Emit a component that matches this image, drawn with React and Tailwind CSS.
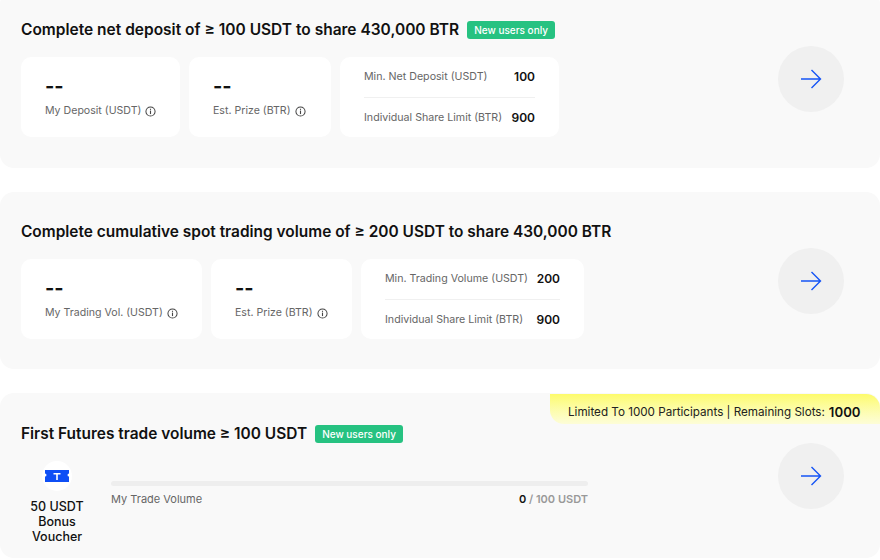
const FONT = { fontFamily: "Inter, 'Liberation Sans', sans-serif" };

function InfoIcon() {
  return (
    <svg width="11" height="11" viewBox="0 0 12 12" fill="none" className="shrink-0 text-[#444]">
      <circle cx="6" cy="6" r="5" stroke="currentColor" strokeWidth="1.1" />
      <rect x="5.4" y="5" width="1.2" height="3.8" fill="currentColor" />
      <rect x="5.4" y="3" width="1.2" height="1.2" fill="currentColor" />
    </svg>
  );
}

function ArrowButton({ className }) {
  return (
    <div className={`flex h-[66px] w-[66px] shrink-0 items-center justify-center rounded-full bg-[#f0f0f0] ${className}`}>
      <svg width="22" height="22" viewBox="0 0 22 22" fill="none">
        <path d="M1 11H20.5M11.5 2L20.5 11L11.5 20" stroke="#1554f5" strokeWidth="1.4" />
      </svg>
    </div>
  );
}

function NewBadge() {
  return (
    <span className="rounded-[3px] bg-[#26c281] px-[7px] py-[2px] text-[10px] leading-[14px] font-medium text-white">
      New users only
    </span>
  );
}

function StatCard({ label, width }) {
  return (
    <div className={`h-[80px] rounded-[10px] bg-white pt-[15px] pl-[24px] ${width}`}>
      <div className="text-[20px] leading-[28px] font-bold text-[#111]">--</div>
      <div className="mt-[3px] flex items-center gap-[4px] text-[10.6px] leading-[16px] text-[#666]">
        {label}
        <InfoIcon />
      </div>
    </div>
  );
}

function LimitRow({ label, value, height }) {
  return (
    <div className={`flex items-center justify-between ${height}`}>
      <span className="text-[10.65px] text-[#666]">{label}</span>
      <span className="text-[12px] font-semibold text-[#111]">{value}</span>
    </div>
  );
}

function TaskCard({ title, titleSize, badge, stats, rows, limitWidth, height }) {
  return (
    <section className={`relative rounded-[14px] bg-[#f9f9f9] pt-[28px] pl-[21px] ${height}`}>
      <div className="flex h-[24px] items-center gap-[8px]">
        <h2 className={`leading-[24px] font-semibold text-[#111] ${titleSize}`}>{title}</h2>
        {badge && <NewBadge />}
      </div>
      <div className="mt-[15px] flex gap-[9px]">
        {stats.map((s) => (
          <StatCard key={s.label} label={s.label} width={s.width} />
        ))}
        <div className={`h-[80px] rounded-[10px] bg-white px-[24px] ${limitWidth}`}>
          <LimitRow label={rows[0].label} value={rows[0].value} height="h-[40px]" />
          <div className="border-t border-[#f0f0f0]" />
          <LimitRow label={rows[1].label} value={rows[1].value} height="h-[39px]" />
        </div>
      </div>
      <ArrowButton className="absolute top-[56px] right-[36px]" />
    </section>
  );
}

function Voucher() {
  return (
    <svg width="24" height="12" viewBox="0 0 24 12">
      <path
        d="M0 0H24V3.5A1.5 1.5 0 0 0 24 6.5V12H0V6.5A1.5 1.5 0 0 0 0 3.5Z"
        fill="#0f4ff5"
      />
      <path d="M8.5 3H15.5V4.5H12.8V10H11.2V4.5H8.5Z" fill="#fff" />
    </svg>
  );
}

export default function App() {
  return (
    <div className="h-[560px] w-[880px] overflow-hidden bg-white" style={FONT}>
      <div className="-mt-[10px] flex flex-col gap-[24px]">
        <TaskCard
          title="Complete net deposit of ≥ 100 USDT to share 430,000 BTR"
          titleSize="text-[15.5px]"
          badge
          height="h-[178px]"
          stats={[
            { label: "My Deposit (USDT)", width: "w-[159px]" },
            { label: "Est. Prize (BTR)", width: "w-[142px]" },
          ]}
          rows={[
            { label: "Min. Net Deposit (USDT)", value: "100" },
            { label: "Individual Share Limit (BTR)", value: "900" },
          ]}
          limitWidth="w-[219px]"
        />
        <TaskCard
          title="Complete cumulative spot trading volume of ≥ 200 USDT to share 430,000 BTR"
          titleSize="text-[15.45px]"
          height="h-[177px]"
          stats={[
            { label: "My Trading Vol. (USDT)", width: "w-[181px]" },
            { label: "Est. Prize (BTR)", width: "w-[141px]" },
          ]}
          rows={[
            { label: "Min. Trading Volume (USDT)", value: "200" },
            { label: "Individual Share Limit (BTR)", value: "900" },
          ]}
          limitWidth="w-[223px]"
        />

        <section className="relative h-[165px] rounded-[14px] bg-[#f9f9f9] pt-[29px] pl-[21px]">
          <div className="absolute top-[1px] right-0 flex h-[30px] w-[330px] items-center rounded-tr-[14px] rounded-bl-[14px] bg-gradient-to-b from-[#fdfb6a] to-[#fdfdd8] pt-[8px] pl-[18px] text-[11.65px] text-[#222]">
            Limited To 1000 Participants | Remaining Slots:
            <span className="ml-[4px] text-[13.2px] font-semibold text-[#111]">1000</span>
          </div>

          <div className="flex h-[24px] items-center gap-[8px]">
            <h2 className="text-[15.45px] leading-[24px] font-semibold text-[#111]">
              First Futures trade volume ≥ 100 USDT
            </h2>
            <NewBadge />
          </div>

          <div className="mt-[15px] flex">
            <div className="flex w-[72px] flex-col items-center">
              <div className="flex h-[30px] w-[30px] items-center justify-center rounded-full bg-white">
                <Voucher />
              </div>
              <div className="mt-[8px] text-center text-[12.5px] leading-[15px] font-medium text-[#111]">
                50 USDT Bonus Voucher
              </div>
            </div>
            <div className="ml-[18px] w-[477px] pt-[20px]">
              <div className="h-[5px] rounded-full bg-[#eeeeee]" />
              <div className="mt-[5px] flex items-center justify-between text-[11px] leading-[16px]">
                <span className="text-[#666]">My Trade Volume</span>
                <span className="font-semibold text-[#999]">
                  <span className="text-[#111]">0</span> / 100 USDT
                </span>
              </div>
            </div>
          </div>

          <ArrowButton className="absolute top-[50px] right-[36px]" />
        </section>
      </div>
    </div>
  );
}
